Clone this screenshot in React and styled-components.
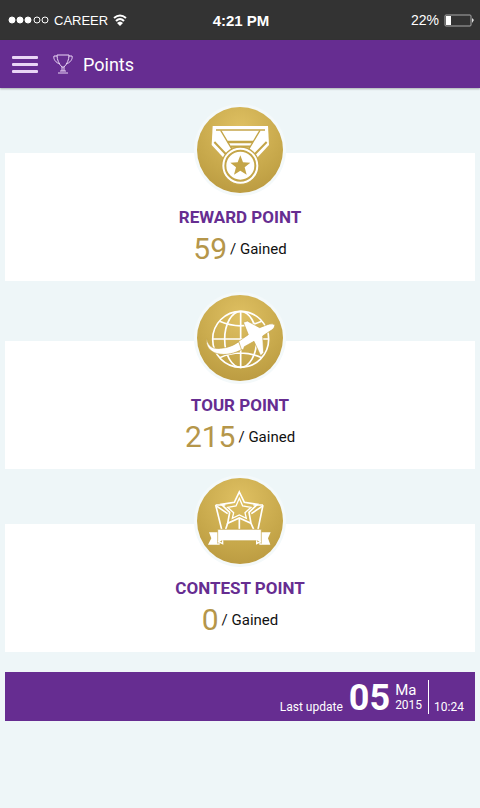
import React from "react"
import styled, { createGlobalStyle } from "styled-components"

const GlobalStyle = createGlobalStyle`
  * {
    box-sizing: border-box;
  }
  body {
    margin: 0;
    background: #eef6f8;
    color: #111;
    font-family: Roboto, "Noto Sans", sans-serif;
  }
`

const MedalIcon = () => (
  <svg viewBox="51 36 258 258" aria-hidden="true">
    <path fill="#fff" d="M98 93H264L267 150L228 192H134L95 150Z" />
    <g fill="none" stroke="#c4a548">
      <path strokeWidth="5" d="M108 105H255" />
      <path strokeWidth="4" d="M122 106L158 166M240 106L204 166" />
      <path strokeWidth="6" d="M103 141L140 180M260 141L222 180" />
      <path strokeWidth="7" d="M143 141H219M152 155H210" />
    </g>
    <circle cx="181" cy="212" r="56" fill="#fff" stroke="#c4a548" strokeWidth="4" />
    <circle cx="181" cy="212" r="45" fill="none" stroke="#c4a548" strokeWidth="6" />
    <path
      fill="#c4a548"
      d="M181 181L189 202L211 203L194 217L200 239L181 227L162 239L168 217L151 203L173 202Z"
    />
  </svg>
)

const GlobeIcon = () => (
  <svg viewBox="51 30 258 258" aria-hidden="true">
    <g fill="none" stroke="#fff" strokeWidth="5">
      <circle cx="182" cy="163" r="84" />
      <ellipse cx="182" cy="163" rx="48" ry="84" />
      <path d="M182 79V247M98 162H266M119 109Q182 136 245 109M119 218Q182 190 245 218" />
    </g>
    <path
      fill="#fff"
      stroke="#c4a548"
      strokeWidth="2"
      d="M80 160C84 184 98 193 122 190C144 188 160 182 176 170L188 192C164 206 137 212 112 206C88 200 76 182 80 160Z"
    />
    <path
      fill="#fff"
      stroke="#c4a548"
      strokeWidth="2"
      strokeLinejoin="round"
      d="M176 169L205 149L190 112L202 108L239 128L262 119C273 115 282 116 284 121C285 128 278 134 269 139L248 153L251 203L242 212L222 169L193 185L190 195L184 193Z"
    />
  </svg>
)

const StarIcon = () => (
  <svg viewBox="51 30 258 258" aria-hidden="true">
    <g fill="none" stroke="#fff" strokeWidth="5">
      <path d="M107 111L136 111M107 111L125 184M249 111L220 111M249 111L234 184" />
      <path d="M111 115L143 137M246 115L214 137M143 166L137 184M213 166L221 184M178 151V184" />
      <path d="M178 72L193 103L232 109L207 133L213 166L178 150L143 166L149 133L124 109L163 103Z" />
      <path
        strokeWidth="4"
        d="M178 91L188 114L213 118L195 134L199 151L178 141L157 151L161 134L143 118L168 114Z"
      />
    </g>
    <path fill="#fff" d="M87 193H119V230H84L94 211ZM238 193H272L264 211L271 230H238Z" />
    <path
      fill="#fff"
      stroke="#c4a548"
      strokeWidth="2"
      d="M113 184H244V226L232 218H126L113 226Z"
    />
    <path fill="none" stroke="#fff" strokeWidth="4" d="M114 220L128 227V217M243 220L230 227V217" />
  </svg>
)

const TrophyIcon = () => (
  <svg
    width="20"
    height="20"
    viewBox="0 0 20 20"
    fill="none"
    stroke="#e9d5f5"
    aria-hidden="true"
  >
    <path d="M4 1H16C16 6 14 10 11 13H9C6 10 4 6 4 1ZM4 2H1C0 5 3 9 7 10M16 2H19C20 5 17 9 13 10" />
    <path d="M9 13V17M11 13V17M7 17H13M5 19H15" />
  </svg>
)

const WifiIcon = () => (
  <svg width="14" height="12" viewBox="0 0 14 12" fill="none" stroke="#fff" aria-hidden="true">
    <path strokeWidth="2" d="M1 4Q7 -1 13 4M3 7Q7 3 11 7" />
    <path fill="#fff" stroke="none" d="M4 9Q7 6 10 9L7 12Z" />
  </svg>
)

const BatteryIcon = () => (
  <svg width="30" height="13" viewBox="0 0 30 13" aria-hidden="true">
    <rect x="1" y="1" width="26" height="11" rx="1" fill="none" stroke="#aaa" />
    <rect x="2" y="2" width="5" height="9" fill="#fff" />
    <path fill="#ddd" d="M28 4L30 6L28 9Z" />
  </svg>
)

const SignalDots = () => (
  <svg width="41" height="8" viewBox="0 0 41 8" fill="#fff" stroke="#fff" aria-hidden="true">
    <circle cx="4" cy="4" r="3" />
    <circle cx="12" cy="4" r="3" />
    <circle cx="20" cy="4" r="3" />
    <circle cx="29" cy="4" r="3" fill="none" />
    <circle cx="37" cy="4" r="3" fill="none" />
  </svg>
)

const points = [
  { title: "REWARD POINT", value: 59, icon: <MedalIcon />, space: 60 },
  { title: "TOUR POINT", value: 215, icon: <GlobeIcon />, space: 55 },
  { title: "CONTEST POINT", value: 0, icon: <StarIcon />, space: 20 },
]

const App = () => {
  return (
    <>
      <GlobalStyle />
      <StatusBar>
        <StatusGroup>
          <SignalDots />
          <span>CAREER</span>
          <WifiIcon />
        </StatusGroup>
        <Clock>4:21 PM</Clock>
        <StatusGroup $end>
          <Percent>22%</Percent>
          <BatteryIcon />
        </StatusGroup>
      </StatusBar>
      <Header>
        <MenuButton type="button" aria-label="Menu">
          <span />
          <span />
          <span />
        </MenuButton>
        <TrophyIcon />
        <h1>Points</h1>
      </Header>
      <Content>
        {points.map(({ title, value, icon, space }) => (
          <Card key={title} $space={space}>
            <Badge>{icon}</Badge>
            <h2>{title}</h2>
            <Score>
              <strong>{value}</strong>
              <span>/ Gained</span>
            </Score>
          </Card>
        ))}
        <UpdateBar>
          <Small>Last update</Small>
          <Day>05</Day>
          <MonthYear>
            <span>Ma</span>
            <Small>2015</Small>
          </MonthYear>
          <Time>10:24</Time>
        </UpdateBar>
      </Content>
    </>
  )
}

export default App

const StatusBar = styled.div`
  display: grid;
  grid-template-columns: 1fr auto 1fr;
  align-items: center;
  height: 40px;
  padding: 0 6px 0 8px;
  background: #333;
  color: #fff;
  font-family: "Liberation Sans", Arial, sans-serif;
  font-size: 13px;
`

const StatusGroup = styled.div`
  display: flex;
  align-items: center;
  justify-content: ${props => (props.$end ? "flex-end" : "flex-start")};
  gap: 5px;
`

const Clock = styled.div`
  font-size: 15px;
  font-weight: 700;
`

const Percent = styled.span`
  font-size: 14px;
`

const Header = styled.header`
  display: flex;
  align-items: center;
  height: 48px;
  padding: 0 12px;
  background: #662d91;
  color: #fff;
  box-shadow: 0 1px 2px rgba(0, 0, 0, 0.3);
  h1 {
    margin: 0 0 0 10px;
    font-size: 18px;
    font-weight: 400;
  }
`

const MenuButton = styled.button`
  display: flex;
  flex-direction: column;
  gap: 4px;
  width: 26px;
  margin: 0 15px 0 0;
  padding: 0;
  border: 0;
  background: none;
  cursor: pointer;
  span {
    height: 3px;
    border-radius: 1px;
    background: #e9d5f5;
  }
`

const Content = styled.main`
  padding: 65px 5px 0;
`

const Card = styled.section`
  display: flex;
  flex-direction: column;
  align-items: center;
  height: 128px;
  margin-bottom: ${props => props.$space}px;
  background: #fff;
  h2 {
    margin: 12px 0 0;
    color: #662d91;
    font-size: 17px;
    font-weight: 700;
    line-height: 24px;
  }
`

const Badge = styled.div`
  flex: none;
  width: 86px;
  height: 86px;
  margin-top: -46px;
  border-radius: 50%;
  background: radial-gradient(circle at 50% 25%, #dfc062, #c6a74a 60%, #b5943c);
  box-shadow: 0 0 0 3px #f4f9fa;
  svg {
    display: block;
    width: 100%;
  }
`

const Score = styled.p`
  display: flex;
  align-items: center;
  gap: 3px;
  margin: 0;
  font-size: 15px;
  line-height: 40px;
  strong {
    color: #b5964a;
    font-size: 30px;
    font-weight: 400;
  }
`

const UpdateBar = styled.footer`
  display: flex;
  align-items: flex-end;
  justify-content: flex-end;
  height: 49px;
  padding: 0 11px 7px 0;
  background: #662d91;
  color: #fff;
`

const Small = styled.span`
  font-size: 12px;
  line-height: 14px;
`

const Day = styled.strong`
  margin: 0 5px 0 6px;
  font-size: 36px;
  line-height: 32px;
`

const MonthYear = styled.div`
  display: flex;
  flex-direction: column;
  align-self: flex-start;
  padding-top: 10px;
  font-size: 15px;
  line-height: 16px;
`

const Time = styled.time`
  display: flex;
  align-items: flex-end;
  height: 34px;
  margin-left: 6px;
  padding-left: 5px;
  border-left: 1px solid #fff;
  font-size: 12px;
  line-height: 14px;
`
